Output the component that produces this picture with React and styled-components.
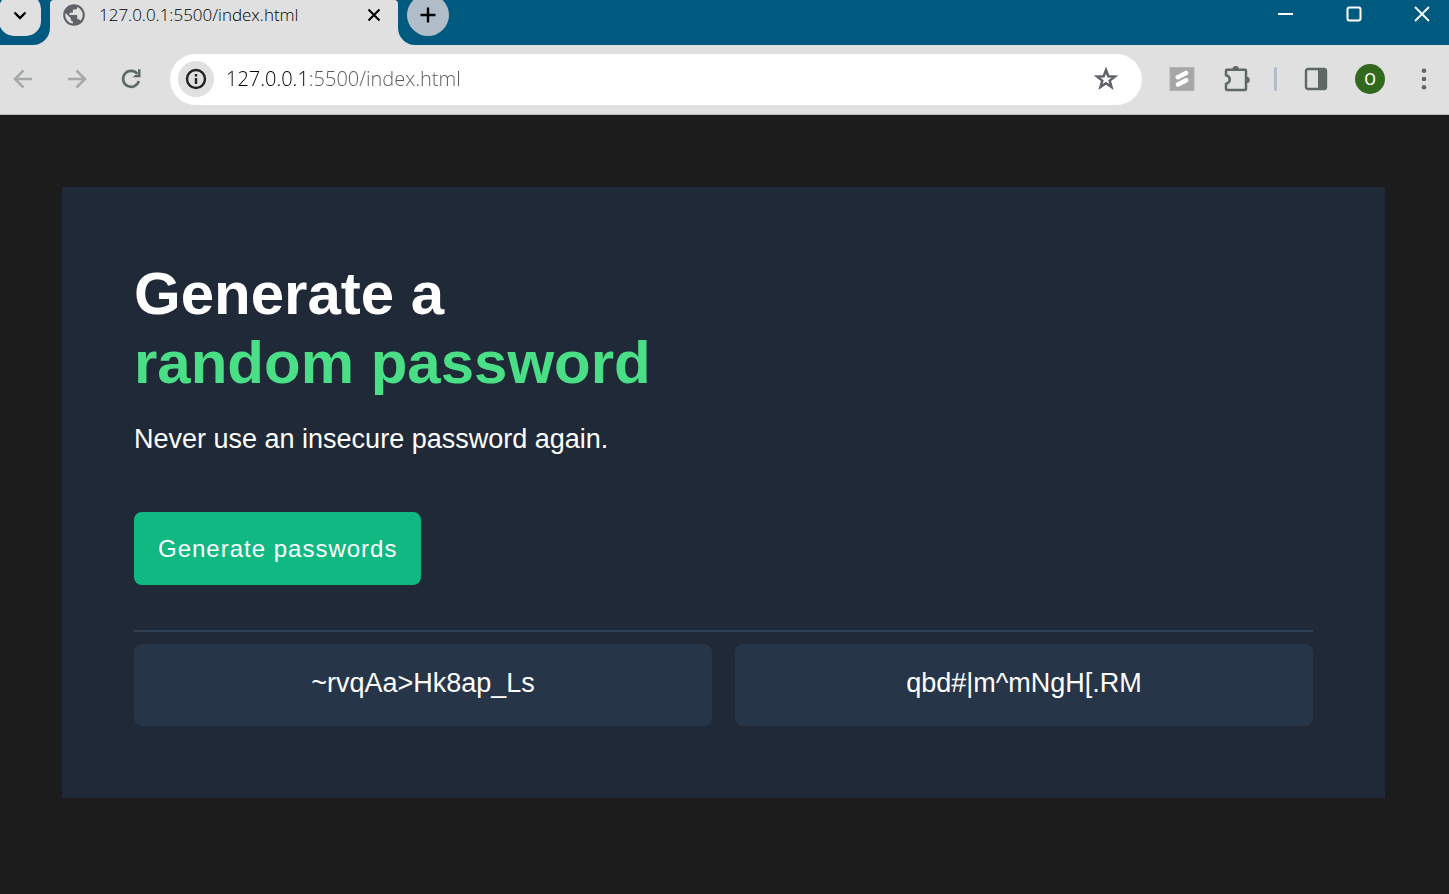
import React from "react";
import styled, { createGlobalStyle } from "styled-components";
import { MdPublic } from "react-icons/md";

const GlobalStyle = createGlobalStyle`
  *, *::before, *::after { box-sizing: border-box; }
  html, body, #root { min-height: 100vh; }
  body {
    margin: 0;
    background: #1c1c1c;
    font-family: "Liberation Sans", Arial, sans-serif;
  }
  button { border: 0; padding: 0; font: inherit; cursor: pointer; }
  svg { display: block; flex: none; }
`;

const uiFont = `"Open Sans", "Segoe UI", sans-serif`;

const Page = styled.div`
  min-height: 100vh;
  display: flex;
  flex-direction: column;
`;

const TabStrip = styled.div`
  display: flex;
  height: 45px;
  background: #e0e0e0;
  overflow: hidden;
`;

const StripStart = styled.div`
  width: 50px;
  background: #005a80;
  border-bottom-right-radius: 17px;
`;

const StripEnd = styled.div`
  flex: 1;
  display: flex;
  justify-content: space-between;
  padding: 0 5px 0 9px;
  background: #005a80;
  border-bottom-left-radius: 17px;
`;

const TabSearch = styled.button`
  display: flex;
  align-items: center;
  justify-content: center;
  width: 42px;
  height: 42px;
  margin: -6px 0 0 -1px;
  border-radius: 15px;
  background: #e0e0e0;
`;

const TabSlot = styled.div`
  width: 348px;
  background: #005a80;
`;

const Tab = styled.div`
  display: flex;
  align-items: center;
  height: 45px;
  padding: 0 13px 15px 11px;
  border-radius: 4px 4px 0 0;
  background: #e0e0e0;
  color: #5f6368;
`;

const TabTitle = styled.span`
  flex: 1;
  margin-left: 12px;
  font: 300 17px/24px ${uiFont};
  color: #000;
  white-space: nowrap;
`;

const TabClose = styled.button`
  display: flex;
  align-items: center;
  justify-content: center;
  width: 22px;
  height: 22px;
  background: transparent;
`;

const NewTab = styled.button`
  display: flex;
  align-items: center;
  justify-content: center;
  width: 42px;
  height: 42px;
  margin-top: -6px;
  border-radius: 50%;
  background: #b2bdca;
`;

const WindowControls = styled.div`
  display: flex;
  gap: 24px;
`;

const WindowButton = styled.button`
  display: flex;
  align-items: center;
  justify-content: center;
  width: 44px;
  height: 28px;
  background: transparent;
`;

const Toolbar = styled.div`
  display: flex;
  align-items: center;
  height: 70px;
  padding: 0 3px 1px 1px;
  background: #e0e0e0;
  border-bottom: 1px solid #b9b9b9;
`;

const ToolGroup = styled.div`
  display: flex;
  align-items: center;
  gap: 10px;
`;

const ToolButton = styled.button`
  display: flex;
  align-items: center;
  justify-content: center;
  width: 44px;
  height: 44px;
  background: transparent;
  color: ${(p) => (p.$dim ? "#a5a9a9" : "#5d6867")};
`;

const AddressBar = styled.div`
  flex: 1;
  display: flex;
  align-items: center;
  height: 51px;
  margin: 0 18px 0 17px;
  padding: 0 14px 0 8px;
  border-radius: 26px;
  background: #fff;
`;

const SiteInfo = styled.button`
  display: flex;
  align-items: center;
  justify-content: center;
  width: 36px;
  height: 36px;
  border-radius: 50%;
  background: #e0e0e0;
`;

const Address = styled.input`
  flex: 1;
  min-width: 0;
  margin: 0 0 0 12px;
  padding: 0;
  border: 0;
  outline: 0;
  font: 300 20px/28px ${uiFont};
  color: transparent;
  background: linear-gradient(90deg, #000 82px, #55585c 82px);
  background-clip: text;
  -webkit-background-clip: text;
`;

const Separator = styled.span`
  width: 3px;
  height: 24px;
  margin: 0 7px 0 6px;
  border-radius: 2px;
  background: #b1bdcb;
`;

const Avatar = styled.span`
  display: flex;
  align-items: center;
  justify-content: center;
  width: 30px;
  height: 30px;
  border-radius: 50%;
  background: #33691e;
  color: #fff;
  font: 400 17px/30px Roboto, sans-serif;
`;

const Main = styled.main`
  padding: 72px 64px 96px 62px;
`;

const Card = styled.section`
  padding: 72px;
  background: #1f2937;
`;

const Title = styled.h1`
  margin: 0;
  font-size: 60px;
  line-height: 69px;
  font-weight: 700;
  color: #fff;
`;

const Accent = styled.span`
  display: block;
  color: #4adf86;
`;

const Lead = styled.p`
  margin: 27px 0 57px;
  font-size: 27px;
  line-height: 31px;
  color: #fff;
`;

const GenerateButton = styled.button`
  display: block;
  && { padding: 0 24px; font-size: 24px; }
  height: 73px;
  border-radius: 8px;
  background: #10b981;
  color: #fff;
  letter-spacing: 1px;
`;

const Divider = styled.hr`
  height: 2px;
  margin: 45px 0 12px;
  border: 0;
  background: #2f3e53;
`;

const Results = styled.div`
  display: grid;
  grid-template-columns: 1fr 1fr;
  gap: 23px;
`;

const Password = styled.output`
  height: 82px;
  padding: 24px;
  border-radius: 8px;
  background: #273549;
  color: #fff;
  font-size: 27px;
  line-height: 31px;
  text-align: center;
`;

const Icon = ({ size = 24, width = 2, children }) => (
  <svg
    width={size}
    height={size}
    viewBox={`0 0 ${size} ${size}`}
    fill="none"
    stroke="currentColor"
    strokeWidth={width}
    aria-hidden="true"
  >
    {children}
  </svg>
);

const passwords = ["~rvqAa>Hk8ap_Ls", "qbd#|m^mNgH[.RM"];

function BrowserTabs() {
  return (
    <TabStrip>
      <StripStart>
        <TabSearch aria-label="Search tabs">
          <Icon size={24} width={2.4}>
            <path d="M6.500 9.500 12 15l5.500-5.500" stroke="#000" />
          </Icon>
        </TabSearch>
      </StripStart>
      <TabSlot>
        <Tab>
          <MdPublic size={26} />
          <TabTitle>127.0.0.1:5500/index.html</TabTitle>
          <TabClose aria-label="Close tab">
            <Icon size={14}>
              <path d="M1.500 1.500l11 11M12.500 1.500l-11 11" stroke="#000" />
            </Icon>
          </TabClose>
        </Tab>
      </TabSlot>
      <StripEnd>
        <NewTab aria-label="New tab">
          <Icon size={16} width={2.4}>
            <path d="M8 .5v15M.5 8h15" stroke="#000" />
          </Icon>
        </NewTab>
        <WindowControls>
          <WindowButton aria-label="Minimize">
            <Icon size={16}>
              <path d="M0 8h15" stroke="#fff" />
            </Icon>
          </WindowButton>
          <WindowButton aria-label="Maximize">
            <Icon size={16} width={2}>
              <rect x="1.500" y="1.500" width="13" height="13" rx="2" stroke="#fff" />
            </Icon>
          </WindowButton>
          <WindowButton aria-label="Close">
            <Icon size={16} width={1.8}>
              <path d="M1 1l14 14M15 1L1 15" stroke="#fff" />
            </Icon>
          </WindowButton>
        </WindowControls>
      </StripEnd>
    </TabStrip>
  );
}

function BrowserToolbar() {
  return (
    <Toolbar>
      <ToolGroup>
        <ToolButton $dim aria-label="Back">
          <Icon size={20} width={2.5}>
            <path d="M19 10H2.500M10.500 1.500 2 10l8.500 8.500" />
          </Icon>
        </ToolButton>
        <ToolButton $dim aria-label="Forward">
          <Icon size={20} width={2.5}>
            <path d="M1 10h16.500M9.500 1.500 18 10l-8.500 8.500" />
          </Icon>
        </ToolButton>
        <ToolButton aria-label="Reload">
          <Icon size={22} width={2.6}>
            <path d="M17.300 5.800a8 8 0 1 0 1.500 7.200" />
            <path d="M20.500 1.200v8h-8l3-2.500h2.500V1.200z" fill="currentColor" stroke="none" />
          </Icon>
        </ToolButton>
      </ToolGroup>
      <AddressBar>
        <SiteInfo aria-label="Site information">
          <Icon size={22} width={2.4}>
            <circle cx="11" cy="11" r="9" stroke="#202124" />
            <path d="M11 10v6M11 6v2.400" stroke="#202124" />
          </Icon>
        </SiteInfo>
        <Address aria-label="Address" defaultValue="127.0.0.1:5500/index.html" />
        <ToolButton aria-label="Bookmark this page">
          <Icon size={28} width={2.5}>
            <path d="M14 5l2.300 6.200 6.600.3-5.200 4.100 1.800 6.400-5.500-3.700-5.500 3.700 1.800-6.400-5.200-4.100 6.600-.3z" stroke="#5f6368" />
          </Icon>
        </ToolButton>
      </AddressBar>
      <ToolGroup>
        <ToolButton aria-label="Scrimba extension">
          <Icon size={26}>
            <rect x="1" y="1.500" width="24" height="23" fill="#a6a6a6" stroke="#b4b4b4" strokeWidth="1" />
            <path d="M8.800 11.200l8.200-4.200M9 18.500l8.200-4.200" stroke="#fff" strokeWidth="4.600" strokeLinecap="round" strokeLinejoin="round" />
            <path d="M7 15.300l12-6.100" stroke="#a6a6a6" strokeWidth="0" />
          </Icon>
        </ToolButton>
        <ToolButton aria-label="Extensions">
          <Icon size={28} width={2.5}>
            <path
              d="M5 4.800h18q1 0 1 1v18.200q0 1-1 1H5q-1 0-1-1v-5.200c5-1.200 5-7.400 0-8.600V5.800q0-1 1-1z"
              strokeLinejoin="round"
            />
            <path d="M10.500 4.200a3.200 3.200 0 0 1 6.400 0zM24.500 11.700a3.200 3.200 0 0 1 0 6.400z" fill="currentColor" stroke="none" />
          </Icon>
        </ToolButton>
        <Separator />
        <ToolButton aria-label="Side panel">
          <Icon size={24} width={2.4}>
            <rect x="2" y="2" width="20" height="20" rx="2" />
            <path d="M14 2h7v20h-7z" fill="currentColor" stroke="none" />
          </Icon>
        </ToolButton>
        <ToolButton aria-label="Profile">
          <Avatar>O</Avatar>
        </ToolButton>
        <ToolButton aria-label="Menu">
          <Icon size={24}>
            <g fill="currentColor" stroke="none">
              <circle cx="12" cy="3.700" r="2.300" />
              <circle cx="12" cy="12" r="2.300" />
              <circle cx="12" cy="20.300" r="2.300" />
            </g>
          </Icon>
        </ToolButton>
      </ToolGroup>
    </Toolbar>
  );
}

export default function App() {
  return (
    <Page>
      <GlobalStyle />
      <header>
        <BrowserTabs />
        <BrowserToolbar />
      </header>
      <Main>
        <Card>
          <Title>
            Generate a<Accent>random password</Accent>
          </Title>
          <Lead>Never use an insecure password again.</Lead>
          <GenerateButton>Generate passwords</GenerateButton>
          <Divider />
          <Results>
            {passwords.map((p) => (
              <Password key={p}>{p}</Password>
            ))}
          </Results>
        </Card>
      </Main>
    </Page>
  );
}
